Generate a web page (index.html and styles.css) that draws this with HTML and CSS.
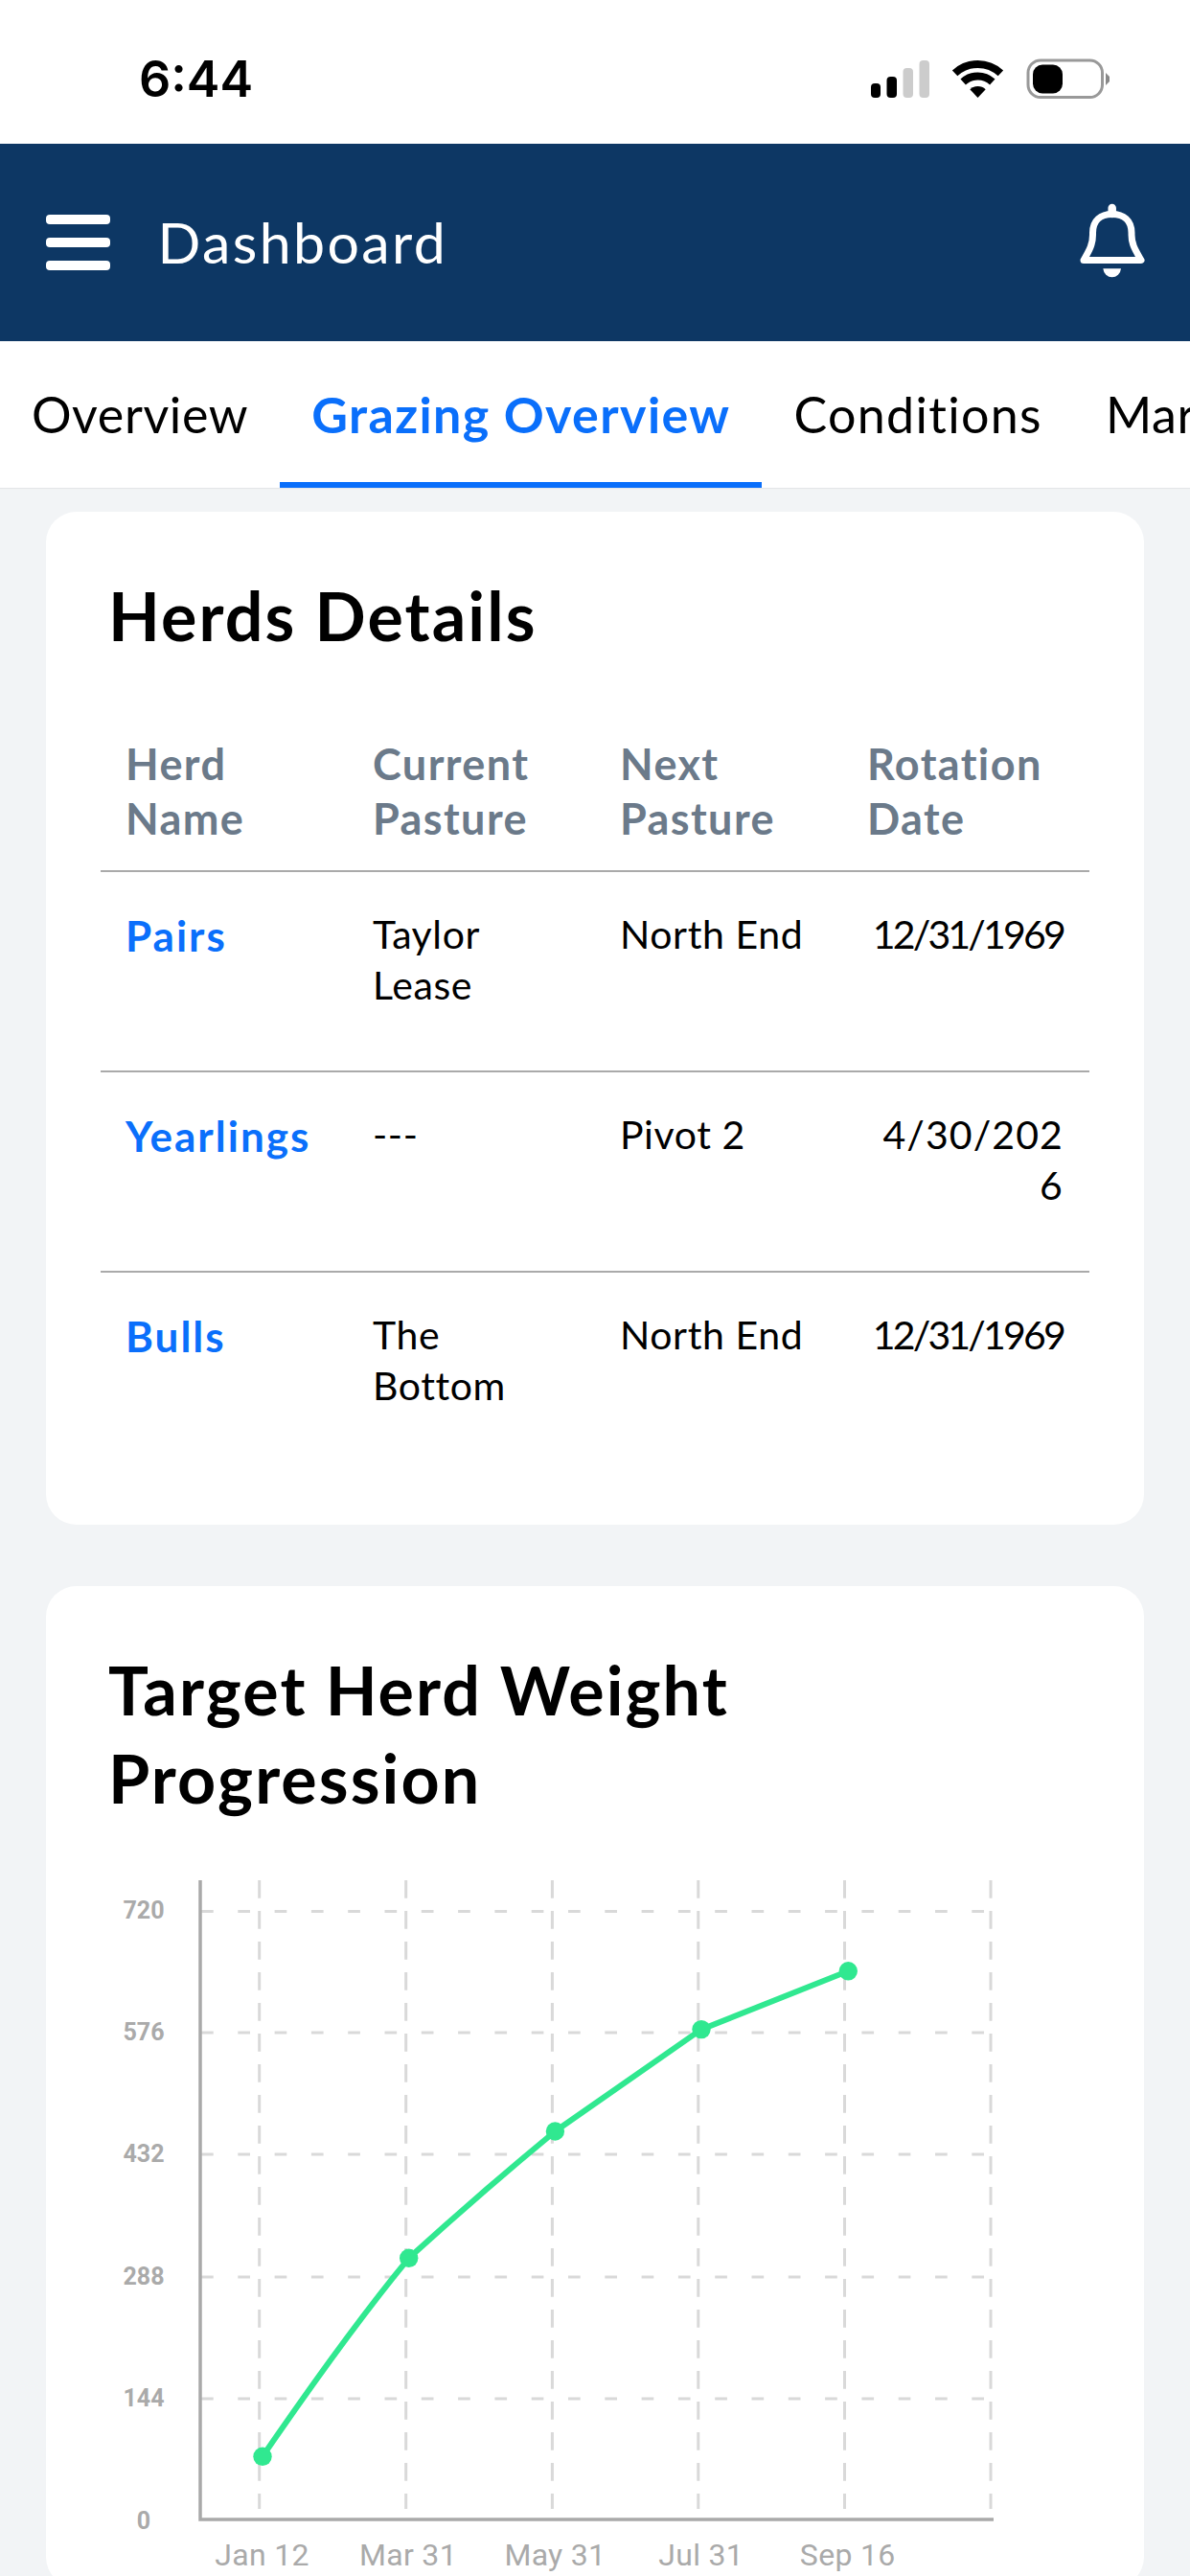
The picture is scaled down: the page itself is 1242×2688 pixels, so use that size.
FILE: index.html
```html
<!DOCTYPE html>
<html lang="en">
<head>
<meta charset="utf-8">
<title>Dashboard</title>
<link rel="stylesheet" href="styles.css">
</head>
<body>
<div class="phone">
  <div class="status">
    <span class="time">6:44</span>
    <svg class="status-icons" viewBox="905 60 255 45" width="255" height="45">
      <rect x="909" y="87" width="10" height="15" rx="4" fill="#000"/>
      <rect x="925.5" y="80" width="10.5" height="22" rx="4" fill="#000"/>
      <rect x="942.5" y="71" width="10.5" height="31" rx="4" fill="#ccc"/>
      <rect x="959.5" y="63" width="10.5" height="39" rx="4" fill="#ccc"/>
      <g transform="translate(994.5 63)">
        <path d="M2.1 13.4A35 35 0 0 1 49.9 13.4" fill="none" stroke="#000" stroke-width="8"/>
        <path d="M10.7 22.5A22.5 22.5 0 0 1 41.3 22.5" fill="none" stroke="#000" stroke-width="8"/>
        <path d="M26 39L17.8 30.2A12 12 0 0 1 34.2 30.2Z" fill="#000"/>
      </g>
      <rect x="1073" y="63" width="77.5" height="38.5" rx="13" fill="none" stroke="#999" stroke-width="3"/>
      <rect x="1078" y="67.5" width="31" height="30" rx="10" fill="#000"/>
      <path d="M1154 76L1158 80V85L1154 89Z" fill="#888"/>
    </svg>
  </div>

  <header class="appbar">
    <div class="menu"><span class="menu-bar"></span><span class="menu-bar"></span><span class="menu-bar"></span></div>
    <h1 class="page-title">Dashboard</h1>
    <svg class="bell" viewBox="0 0 100 100" width="100" height="100">
      <path d="M21 68.5C27 58 30.5 52 30.5 42V40C30.5 27 39 20.5 50.7 20.5C62.5 20.5 71 27 71 40V42C71 52 75 58 81 68.5Z" fill="none" stroke="#fff" stroke-width="7" stroke-linejoin="round"/>
      <path d="M50.7 14V20" fill="none" stroke="#fff" stroke-width="8.5" stroke-linecap="round"/>
      <path d="M41.3 77.3H60A9.4 10 0 0 1 41.3 77.3Z" fill="#fff"/>
    </svg>
  </header>

  <nav class="tabs">
    <span class="tab">Overview</span>
    <span class="tab tab-active">Grazing Overview</span>
    <span class="tab tab-wide">Conditions</span>
    <span class="tab">Market</span>
  </nav>

  <main class="content">
    <section class="card">
      <h2 class="card-title">Herds Details</h2>
      <table class="herds">
        <thead>
          <tr>
            <th>Herd<br>Name</th>
            <th>Current<br>Pasture</th>
            <th>Next<br>Pasture</th>
            <th>Rotation<br>Date</th>
          </tr>
        </thead>
        <tbody>
          <tr>
            <td class="herd-name">Pairs</td>
            <td>Taylor<br>Lease</td>
            <td>North End</td>
            <td class="date">12/31/1969</td>
          </tr>
          <tr>
            <td class="herd-name">Yearlings</td>
            <td>---</td>
            <td>Pivot 2</td>
            <td class="date date-wide">4/30/202<br>6</td>
          </tr>
          <tr>
            <td class="herd-name">Bulls</td>
            <td>The<br>Bottom</td>
            <td>North End</td>
            <td class="date">12/31/1969</td>
          </tr>
        </tbody>
      </table>
    </section>

    <section class="card card-chart">
      <h2 class="card-title">Target Herd Weight<br>Progression</h2>
      <svg class="chart" viewBox="48 1940 1146 760" width="1146" height="760">
        <g class="grid-h">
          <path d="M210 1994.5H1034"/>
          <path d="M210 2121H1034"/>
          <path d="M210 2248H1034"/>
          <path d="M210 2376H1034"/>
          <path d="M210 2503H1034"/>
        </g>
        <g class="grid-v">
          <path d="M270.7 1962V2618"/>
          <path d="M423.7 1962V2618"/>
          <path d="M576.4 1962V2618"/>
          <path d="M728.8 1962V2618"/>
          <path d="M881.5 1962V2618"/>
          <path d="M1034 1962V2618"/>
        </g>
        <path class="axis" d="M209 1962V2629H1037"/>
        <path class="series" d="M274 2563.3C324.9 2489 375.8 2418 426.7 2356.3C477.6 2310 528.5 2266 579.4 2224L732 2117.6L885.3 2056.8"/>
        <g class="dots">
          <circle cx="274" cy="2563.3" r="9.7"/>
          <circle cx="426.7" cy="2356.3" r="9.7"/>
          <circle cx="579.4" cy="2224" r="9.7"/>
          <circle cx="732" cy="2117.6" r="9.7"/>
          <circle cx="885.3" cy="2056.8" r="9.7"/>
        </g>
        <g class="y-labels">
          <text x="150" y="2002">720</text>
          <text x="150" y="2129">576</text>
          <text x="150" y="2256">432</text>
          <text x="150" y="2384">288</text>
          <text x="150" y="2511">144</text>
          <text x="150" y="2639">0</text>
        </g>
        <g class="x-labels">
          <text x="273.5" y="2677">Jan 12</text>
          <text x="426" y="2677">Mar 31</text>
          <text x="579.4" y="2677">May 31</text>
          <text x="731.7" y="2677">Jul 31</text>
          <text x="884.7" y="2677">Sep 16</text>
        </g>
      </svg>
    </section>
  </main>
</div>
</body>
</html>
```
FILE: styles.css
```css
* { box-sizing: border-box; }
html, body { margin: 0; padding: 0; }
body { font-family: "Lato", "Liberation Sans", sans-serif; color: #000; }

.phone {
  width: 1242px;
  height: 2688px;
  overflow: hidden;
  background: #f2f4f6;
}

.status {
  height: 150px;
  background: #fff;
  display: flex;
  justify-content: space-between;
  align-items: flex-start;
  padding: 57px 82px 0 145px;
}
.time {
  font-family: "Inter", "Liberation Sans", sans-serif;
  font-weight: 600;
  font-size: 52px;
  line-height: 52px;
}
.status-icons { display: block; margin-top: 3px; }

.appbar {
  height: 206px;
  background: #0d3764;
  display: flex;
  align-items: center;
  padding: 0 32px 0 48px;
}
.menu {
  display: flex;
  flex-direction: column;
  gap: 14px;
  width: 66.5px;
}
.menu-bar {
  display: block;
  height: 10px;
  border-radius: 4px;
  background: #fff;
}
.page-title {
  margin: 0 0 0 50px;
  font-size: 59px;
  font-weight: 400;
  color: #fff;
  line-height: 1.2;
  letter-spacing: 2.4px;
}
.bell { display: block; margin-left: auto; }

.tabs {
  height: 153px;
  background: #fff;
  display: flex;
  overflow: hidden;
  box-shadow: 0 1px 1px #e4e6e8;
}
.tab {
  flex: none;
  display: flex;
  align-items: center;
  padding: 5px 33px 0;
  font-size: 52px;
  letter-spacing: 0.6px;
  white-space: nowrap;
  border-bottom: 6px solid transparent;
}
.tab-active {
  font-weight: 700;
  letter-spacing: 1.4px;
  color: #0a6ffb;
  border-bottom-color: #0a6ffb;
}
.tab-wide { letter-spacing: 1.3px; }

.content {
  padding: 25px 48px 0;
}
.card {
  background: #fff;
  border-radius: 32px;
  padding: 62px 0 55px;
  margin-bottom: 64px;
}
.card-title {
  margin: 0 0 0 65px;
  font-size: 70px;
  font-weight: 700;
  line-height: 92px;
  letter-spacing: 2.1px;
}

.herds {
  width: 1032px;
  margin: 80px 57px 0;
  border-collapse: collapse;
  table-layout: fixed;
}
.herds th {
  padding: 1px 27px 25px 26px;
  text-align: left;
  font-size: 45px;
  line-height: 57px;
  font-weight: 700;
  letter-spacing: 1.4px;
  color: #6b7a8a;
  border-bottom: 2px solid #aaa;
}
.herds td {
  height: 209px;
  padding: 38px 27px 0 26px;
  vertical-align: top;
  font-size: 41px;
  line-height: 53px;
  letter-spacing: 0.6px;
  border-bottom: 2px solid #aaa;
}
.herds tbody tr:last-child td { border-bottom: 0; }
.herds .herd-name {
  padding-top: 40px;
  font-weight: 700;
  color: #0a6ffb;
  font-size: 44px;
  letter-spacing: 2px;
}
.herds .date { text-align: right; letter-spacing: -2.8px; }
.herds .date-wide { letter-spacing: 1.1px; }

.card-chart { padding-bottom: 0; }
.chart { display: block; margin-top: 39px; }
.grid-h path { fill: none; stroke: #d9d9d9; stroke-width: 3; stroke-dasharray: 12.7 25.6; }
.grid-v path { fill: none; stroke: #d9d9d9; stroke-width: 3; stroke-dasharray: 18.7 13.3; }
.axis { fill: none; stroke: #a9a9a9; stroke-width: 3.5; }
.series { fill: none; stroke: #30e890; stroke-width: 6; }
.dots circle { fill: #30e890; }
.y-labels text {
  font-family: "Roboto", "Liberation Sans", sans-serif;
  font-size: 25px;
  font-weight: 700;
  fill: #aaa;
  text-anchor: middle;
}
.x-labels text {
  font-family: "Roboto", "Liberation Sans", sans-serif;
  font-size: 32px;
  letter-spacing: 0.3px;
  fill: #aaa;
  text-anchor: middle;
}
```
